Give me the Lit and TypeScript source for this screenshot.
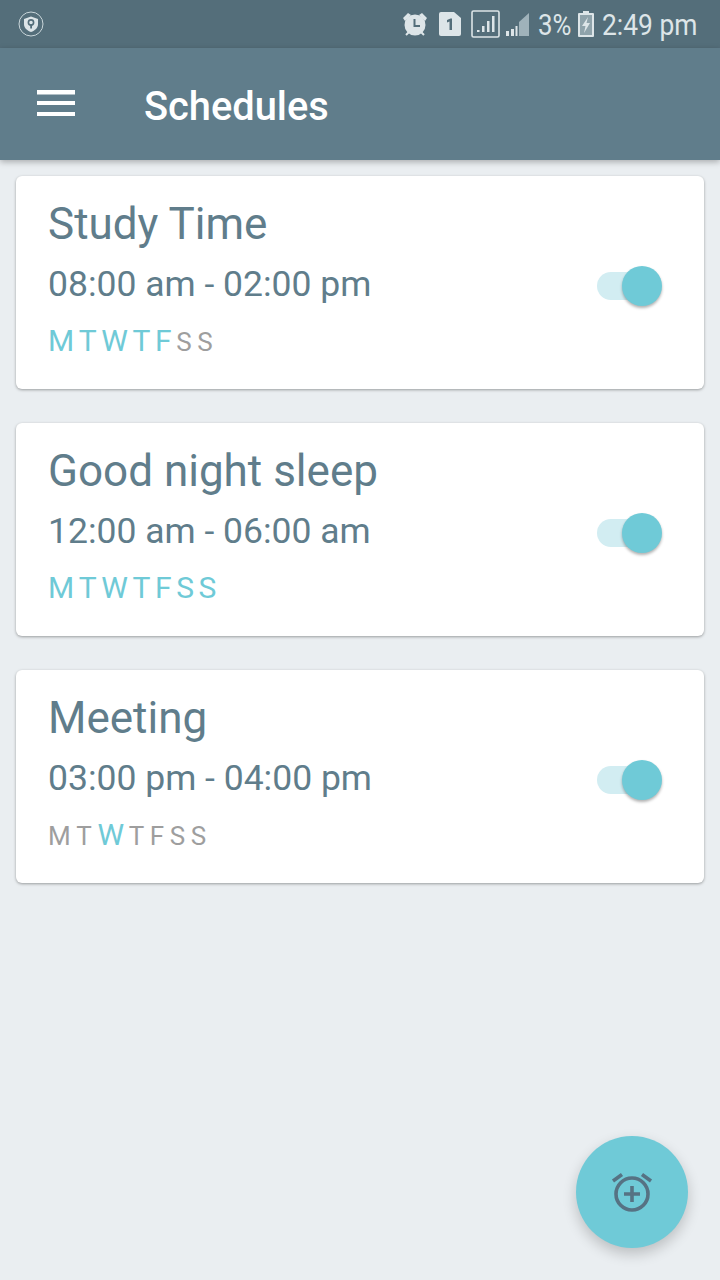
import { LitElement, html, css, svg } from 'lit'
import { customElement } from 'lit/decorators.js'
import { classMap } from 'lit/directives/class-map.js'

interface Schedule {
  name: string
  time: string
  days: boolean[]
}

const LETTERS = ['M', 'T', 'W', 'T', 'F', 'S', 'S']

const SCHEDULES: Schedule[] = [
  { name: 'Study Time', time: '08:00 am - 02:00 pm', days: [true, true, true, true, true, false, false] },
  { name: 'Good night sleep', time: '12:00 am - 06:00 am', days: [true, true, true, true, true, true, true] },
  { name: 'Meeting', time: '03:00 pm - 04:00 pm', days: [false, false, true, false, false, false, false] },
]

@customElement('app-root')
export class AppRoot extends LitElement {
  static styles = css`
    :host {
      display: block;
      position: relative;
      height: 1280px;
      overflow: hidden;
      background: #eaeef1;
      font-family: Roboto, sans-serif;
    }
    .status {
      height: 48px;
      background: #546e7a;
      display: flex;
      align-items: center;
      padding: 0 22px 0 18px;
      color: #dde5e8;
    }
    .status svg { display: block; flex: none; }
    .spacer { flex: 1; }
    .pct {
      font-size: 30px;
      margin: 0 7px 0 9px;
      width: 33px;
      white-space: nowrap;
      transform: scaleX(0.86);
      transform-origin: left;
    }
    .clock {
      font-size: 30px;
      margin-left: 8px;
      width: 96px;
      white-space: nowrap;
      transform: scaleX(0.88);
      transform-origin: left;
    }
    .bar {
      position: relative;
      height: 112px;
      background: #607d8b;
      display: flex;
      align-items: center;
      box-shadow: 0 2px 6px rgba(0, 0, 0, 0.28);
    }
    .menu { margin: -2px 0 0 37px; display: block; }
    .bar h1 {
      margin: 4px 0 0 69px;
      font-size: 39.8px;
      font-weight: 500;
      color: #fff;
    }
    .list {
      display: flex;
      flex-direction: column;
      gap: 34px;
      padding: 16px;
    }
    .card {
      height: 213px;
      box-sizing: border-box;
      background: #fff;
      border-radius: 6px;
      box-shadow: 0 1px 3px rgba(0, 0, 0, 0.35);
      padding: 19px 42px 0 32px;
      display: flex;
      align-items: center;
      justify-content: space-between;
    }
    .info { align-self: flex-start; }
    .name { font-size: 44px; line-height: 58px; color: #607d8b; }
    .time { font-size: 35.5px; line-height: 44px; margin-top: 9px; color: #607d8b; }
    .days {
      display: flex;
      align-items: baseline;
      height: 40px;
      margin-top: 17px;
      color: #9e9e9e;
      font-size: 26px;
      letter-spacing: 2px;
    }
    .days span { margin-right: 3.6px; }
    .days .on { color: #6fcad7; font-size: 30px; margin-right: 2.6px; }
    .toggle { position: relative; width: 64px; height: 40px; margin-top: -13px; }
    .track {
      position: absolute;
      left: -1px;
      top: 6px;
      width: 56px;
      height: 28px;
      border-radius: 14px;
      background: #d2edf2;
    }
    .thumb {
      position: absolute;
      right: 0;
      top: 0;
      width: 40px;
      height: 40px;
      border-radius: 50%;
      background: #6fcad7;
      box-shadow: 0 2px 3px rgba(0, 0, 0, 0.3);
    }
    .fab {
      position: absolute;
      right: 32px;
      bottom: 32px;
      width: 112px;
      height: 112px;
      border-radius: 50%;
      background: #6fcad7;
      box-shadow: 0 6px 14px rgba(0, 0, 0, 0.2);
      display: flex;
      align-items: center;
      justify-content: center;
    }
  `

  private statusIcons() {
    return html`
      <svg width="26" height="26" viewBox="0 0 26 26">
        <circle cx="13" cy="13" r="12" fill="none" stroke="#c9d6da" stroke-width="1" />
        <path d="M13 5.5 L20 8 V13 C20 17 17 19.5 13 21 C9 19.5 6 17 6 13 V8 Z" fill="#dde5e8" />
        <circle cx="13" cy="11.5" r="2.6" fill="none" stroke="#546e7a" stroke-width="1.6" />
        <rect x="12.2" y="13.5" width="1.8" height="4" fill="#546e7a" />
      </svg>
      <div class="spacer"></div>
      <svg width="26" height="26" viewBox="0 0 26 26">
        <circle cx="13" cy="14" r="10.5" fill="#dde5e8" />
        <path d="M1 7 L6 2 L9 4 L3 10 Z M25 7 L20 2 L17 4 L23 10 Z" fill="#dde5e8" />
        <path d="M4 24 L7 21 M22 24 L19 21" stroke="#dde5e8" stroke-width="2" />
        <path d="M12.5 8 V15 H18" fill="none" stroke="#546e7a" stroke-width="2" />
      </svg>
      <svg style="margin-left:11px" width="22" height="24" viewBox="0 0 22 24">
        <path d="M2 0 H15 L22 6 V22 Q22 24 20 24 H2 Q0 24 0 22 V2 Q0 0 2 0 Z" fill="#dde5e8" />
        <path d="M8 8 L11.5 6.5 H13 V18 H10.5 V9.5 L8 10.5 Z" fill="#546e7a" />
      </svg>
      <svg style="margin-left:10px" width="29" height="28" viewBox="0 0 29 28">
        <rect x="1" y="1" width="27" height="26" rx="1.5" fill="none" stroke="#dde5e8" stroke-width="1.6" />
        <path d="M6 20h2.5v2H6z M11 16h2.5v6H11z M16 11h2.5v11H16z M21 6h2.5v16H21z" fill="#dde5e8" />
      </svg>
      <svg style="margin-left:5px" width="24" height="24" viewBox="0 0 24 24">
        <path d="M24 1 V24 H14 V10 Z" fill="#9fb2ba" />
        <path d="M1 19h3v5H1z M6 17h3v7H6z" fill="#dde5e8" />
        <path d="M10.5 14h2v10h-2z" fill="#dde5e8" />
      </svg>
    `
  }

  private renderCard(s: Schedule) {
    return html`
      <div class="card">
        <div class="info">
          <div class="name">${s.name}</div>
          <div class="time">${s.time}</div>
          <div class="days">
            ${LETTERS.map((l, i) => html`<span class=${classMap({ on: s.days[i] })}>${l}</span>`)}
          </div>
        </div>
        <div class="toggle">
          <div class="track"></div>
          <div class="thumb"></div>
        </div>
      </div>
    `
  }

  render() {
    return html`
      <div class="status">
        ${this.statusIcons()}
        <span class="pct">3%</span>
        <svg width="16" height="26" viewBox="0 0 16 26">
          <path d="M5 0h6v2h4a1 1 0 0 1 1 1v22a1 1 0 0 1-1 1H1a1 1 0 0 1-1-1V3a1 1 0 0 1 1-1h4z" fill="#dde5e8" />
          <rect x="2" y="4" width="12" height="20" fill="#8fa3ab" />
          <path d="M10 6 L4 15 H7.5 L6 22 L12 12 H8.5 Z" fill="#dde5e8" />
        </svg>
        <span class="clock">2:49 pm</span>
      </div>
      <div class="bar">
        <svg class="menu" width="38" height="26" viewBox="0 0 38 26">
          <path d="M0 0h38v4.5H0z M0 11h38v4H0z M0 22h38v4H0z" fill="#fff" />
        </svg>
        <h1>Schedules</h1>
      </div>
      <div class="list">${SCHEDULES.map((s) => this.renderCard(s))}</div>
      <div class="fab">
        <svg width="42" height="40" viewBox="0 0 42 40" fill="none" stroke="#567283">
          ${svg`
            <circle cx="21" cy="22" r="16" stroke-width="3.6" />
            <path d="M21 14 V30 M13 22 H29" stroke-width="3.6" />
            <path d="M2 9 L11 2.5 M40 9 L31 2.5" stroke-width="3.6" />
          `}
        </svg>
      </div>
    `
  }
}

declare global {
  interface HTMLElementTagNameMap {
    'app-root': AppRoot
  }
}
